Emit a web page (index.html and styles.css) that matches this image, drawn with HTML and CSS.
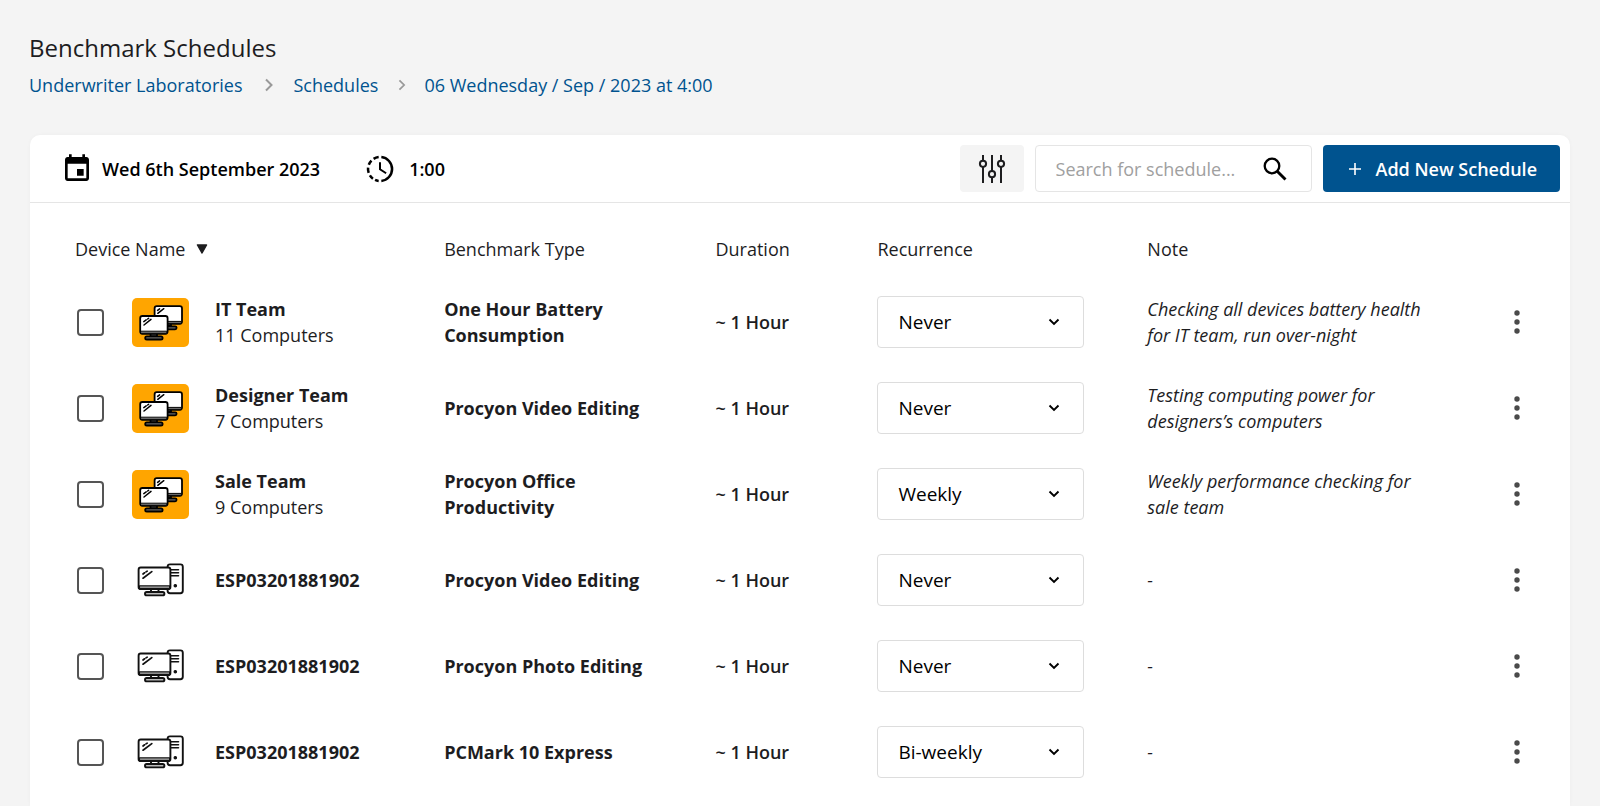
FILE: index.html
```html
<!DOCTYPE html>
<html lang="en">
<head>
<meta charset="utf-8">
<meta name="viewport" content="width=device-width, initial-scale=1">
<title>Benchmark Schedules</title>
<link rel="stylesheet" href="styles.css">
</head>
<body>
<svg class="sprite" aria-hidden="true">
  <symbol id="icon-team" viewBox="0 0 57 49">
    <g stroke="#000" stroke-width="1.8" stroke-linecap="round" stroke-linejoin="round">
      <path d="M33 25v3h6v-3" fill="#666"/>
      <rect x="28" y="28.3" width="16.6" height="3" rx="1.5" fill="#666"/>
      <rect x="22.6" y="8.2" width="27.4" height="17.6" rx="2.2" fill="#fff"/>
      <path d="M23.5 23.4h25.8v1.8H23.500z" fill="#999" stroke-width="1"/>
      <path d="M25.800 15.300l6-4.600M25.600 12.400l2-1.500" stroke-width="1.500"/>
      <path d="M18.500 35.500v3h6.500v-3" fill="#666"/>
      <rect x="13.200" y="38.300" width="17.400" height="3.200" rx="1.600" fill="#666"/>
      <rect x="8.200" y="18" width="27.400" height="17.800" rx="2.200" fill="#fff"/>
      <path d="M9 33.200h25.800v2H9z" fill="#999" stroke-width="1"/>
      <path d="M12 27l7-5.600M11.800 23.600l2.400-1.700M15.600 21l1-.7" stroke-width="1.500"/>
    </g>
  </symbol>
  <symbol id="icon-pc" viewBox="0 0 57 49">
    <g stroke="#111" stroke-width="1.900" stroke-linecap="round" stroke-linejoin="round">
      <rect x="35.600" y="8.400" width="15.200" height="28.800" rx="2.400" fill="#fff"/>
      <path d="M38 13.800h8.500M38 16.800h8.500M38 19.800h8.500" stroke-width="1.600"/>
      <circle cx="43.300" cy="29.800" r="1.200" fill="#111" stroke-width="1.200"/>
      <path d="M19 33.500v3h7.500v-3" fill="#fff"/>
      <rect x="13" y="36" width="19.400" height="3.400" rx="1.700" fill="#bbb"/>
      <rect x="6.600" y="11.500" width="31.800" height="21.600" rx="2.200" fill="#fff"/>
      <path d="M7.400 29.800h30.300v2.500H7.400z" fill="#bbb" stroke-width="1.300"/>
      <path d="M11 22.200l8.800-6.600M11 18l1.600-1.200M14 15.900l1.200-.8" stroke-width="1.700"/>
    </g>
  </symbol>
  <symbol id="icon-dots" viewBox="0 0 24 24">
    <circle cx="12" cy="3" r="2.700"/><circle cx="12" cy="12" r="2.700"/><circle cx="12" cy="21" r="2.700"/>
  </symbol>
  <symbol id="icon-down" viewBox="0 0 12 8">
    <path d="M1.500 1.500L6 6l4.500-4.500" fill="none" stroke="#000" stroke-width="1.900"/>
  </symbol>
</svg>

<main class="page">
  <h1 class="title">Benchmark Schedules</h1>
  <nav class="crumbs" aria-label="Breadcrumb">
    <a href="#">Underwriter Laboratories</a>
    <svg class="crumb-arrow" viewBox="0 0 10 14" aria-hidden="true"><path d="M2 1.500L7.500 7 2 12.500"/></svg>
    <a href="#">Schedules</a>
    <svg class="crumb-arrow crumb-arrow-small" viewBox="0 0 10 14" aria-hidden="true"><path d="M2 1.500L7.500 7 2 12.500"/></svg>
    <a href="#" aria-current="page">06 Wednesday / Sep / 2023 at 4:00</a>
  </nav>

  <section class="card">
    <div class="toolbar">
      <div class="when">
        <svg class="when-icon" viewBox="0 0 24 24" aria-hidden="true"><path d="M17 12h-5v5h5v-5zM16 1v2H8V1H6v2H5c-1.110 0-1.990.9-1.990 2L3 19c0 1.100.89 2 2 2h14c1.100 0 2-.9 2-2V5c0-1.100-.9-2-2-2h-1V1h-2zm3 18H5V8h14v11z"/></svg>
        <span>Wed 6th September 2023</span>
      </div>
      <div class="when when-time">
        <svg class="when-icon" viewBox="0 0 24 24" fill="none" stroke="#000" stroke-width="1.900" aria-hidden="true">
          <path d="M13 3.050A9 9 0 0 1 13 20.950"/>
          <path d="M11 3.050A9 9 0 0 0 7.200 4.400M5.600 5.650A9 9 0 0 0 3.600 8.800M3.050 11A9 9 0 0 0 3.500 14.900M4.400 16.800A9 9 0 0 0 6.700 19.250M8.300 20.200A9 9 0 0 0 11 20.950"/>
          <path d="M12 7v5.200l4.600 3" stroke-width="1.500"/>
        </svg>
        <span>1:00</span>
      </div>
      <div class="actions">
        <button class="filter" type="button" aria-label="Filter schedules">
          <svg class="filter-icon" viewBox="0 0 28 30" fill="none" stroke="#1d1d1f" stroke-width="2" aria-hidden="true">
            <path d="M5 1v5.500M5 13v16M14 1v16M14 23.500V29M23 1v5.500M23 13v16"/>
            <circle cx="5" cy="9.800" r="3.100"/><circle cx="14" cy="20.200" r="3.100"/><circle cx="23" cy="9.800" r="3.100"/>
          </svg>
        </button>
        <form class="search" role="search">
          <input class="search-input" type="search" aria-label="Search for schedule" placeholder="Search for schedule...">
          <button class="search-button" type="button" aria-label="Search">
            <svg class="search-icon" viewBox="0 0 24 24" fill="none" stroke="#000" aria-hidden="true"><circle cx="9" cy="9" r="7.300" stroke-width="2.300"/><path d="M14.200 14.200l8.300 8.300" stroke-width="2.900"/></svg>
          </button>
        </form>
        <button class="add" type="button">
          <svg class="add-icon" viewBox="0 0 14 14" aria-hidden="true"><path d="M7 1v12M1 7h12" stroke="#fff" stroke-width="1.600"/></svg>
          <span>Add New Schedule</span>
        </button>
      </div>
    </div>

    <div class="table-wrap">
      <table class="table">
        <colgroup><col class="col-name"><col class="col-type"><col class="col-duration"><col class="col-recurrence"><col><col class="col-menu"></colgroup>
        <thead>
          <tr>
            <th scope="col"><button class="sort" type="button">Device Name <svg class="sort-icon" viewBox="0 0 12 10" aria-hidden="true"><path d="M1.500 1h9L6 9z" stroke="#1d1d1f" stroke-width="1.500" stroke-linejoin="round" fill="#1d1d1f"/></svg></button></th>
            <th scope="col">Benchmark Type</th>
            <th scope="col">Duration</th>
            <th scope="col">Recurrence</th>
            <th scope="col">Note</th>
            <td></td>
          </tr>
        </thead>
        <tbody>
          <tr>
            <td><div class="device"><input class="check" type="checkbox" id="d1"><svg class="device-icon device-team" aria-hidden="true"><use href="#icon-team"/></svg><label for="d1"><strong>IT Team</strong><span>11 Computers</span></label></div></td>
            <td class="type">One Hour Battery Consumption</td>
            <td class="duration">~ 1 Hour</td>
            <td><div class="select"><select aria-label="Recurrence for IT Team"><option>Never</option><option>Weekly</option><option>Bi-weekly</option></select><svg class="select-icon" aria-hidden="true"><use href="#icon-down"/></svg></div></td>
            <td><p class="note">Checking all devices battery health for IT team, run over-night</p></td>
            <td><button class="menu" type="button" aria-label="More options"><svg class="menu-icon" aria-hidden="true"><use href="#icon-dots"/></svg></button></td>
          </tr>
          <tr>
            <td><div class="device"><input class="check" type="checkbox" id="d2"><svg class="device-icon device-team" aria-hidden="true"><use href="#icon-team"/></svg><label for="d2"><strong>Designer Team</strong><span>7 Computers</span></label></div></td>
            <td class="type">Procyon Video Editing</td>
            <td class="duration">~ 1 Hour</td>
            <td><div class="select"><select aria-label="Recurrence for Designer Team"><option>Never</option><option>Weekly</option><option>Bi-weekly</option></select><svg class="select-icon" aria-hidden="true"><use href="#icon-down"/></svg></div></td>
            <td><p class="note">Testing computing power for designers’s computers</p></td>
            <td><button class="menu" type="button" aria-label="More options"><svg class="menu-icon" aria-hidden="true"><use href="#icon-dots"/></svg></button></td>
          </tr>
          <tr>
            <td><div class="device"><input class="check" type="checkbox" id="d3"><svg class="device-icon device-team" aria-hidden="true"><use href="#icon-team"/></svg><label for="d3"><strong>Sale Team</strong><span>9 Computers</span></label></div></td>
            <td class="type">Procyon Office Productivity</td>
            <td class="duration">~ 1 Hour</td>
            <td><div class="select"><select aria-label="Recurrence for Sale Team"><option>Never</option><option selected>Weekly</option><option>Bi-weekly</option></select><svg class="select-icon" aria-hidden="true"><use href="#icon-down"/></svg></div></td>
            <td><p class="note">Weekly performance checking for sale team</p></td>
            <td><button class="menu" type="button" aria-label="More options"><svg class="menu-icon" aria-hidden="true"><use href="#icon-dots"/></svg></button></td>
          </tr>
          <tr>
            <td><div class="device"><input class="check" type="checkbox" id="d4"><svg class="device-icon" aria-hidden="true"><use href="#icon-pc"/></svg><label for="d4"><strong>ESP03201881902</strong></label></div></td>
            <td class="type">Procyon Video Editing</td>
            <td class="duration">~ 1 Hour</td>
            <td><div class="select"><select aria-label="Recurrence for ESP03201881902, video editing"><option>Never</option><option>Weekly</option><option>Bi-weekly</option></select><svg class="select-icon" aria-hidden="true"><use href="#icon-down"/></svg></div></td>
            <td><p class="note">-</p></td>
            <td><button class="menu" type="button" aria-label="More options"><svg class="menu-icon" aria-hidden="true"><use href="#icon-dots"/></svg></button></td>
          </tr>
          <tr>
            <td><div class="device"><input class="check" type="checkbox" id="d5"><svg class="device-icon" aria-hidden="true"><use href="#icon-pc"/></svg><label for="d5"><strong>ESP03201881902</strong></label></div></td>
            <td class="type">Procyon Photo Editing</td>
            <td class="duration">~ 1 Hour</td>
            <td><div class="select"><select aria-label="Recurrence for ESP03201881902, photo editing"><option>Never</option><option>Weekly</option><option>Bi-weekly</option></select><svg class="select-icon" aria-hidden="true"><use href="#icon-down"/></svg></div></td>
            <td><p class="note">-</p></td>
            <td><button class="menu" type="button" aria-label="More options"><svg class="menu-icon" aria-hidden="true"><use href="#icon-dots"/></svg></button></td>
          </tr>
          <tr>
            <td><div class="device"><input class="check" type="checkbox" id="d6"><svg class="device-icon" aria-hidden="true"><use href="#icon-pc"/></svg><label for="d6"><strong>ESP03201881902</strong></label></div></td>
            <td class="type">PCMark 10 Express</td>
            <td class="duration">~ 1 Hour</td>
            <td><div class="select"><select aria-label="Recurrence for ESP03201881902, PCMark 10"><option>Never</option><option>Weekly</option><option selected>Bi-weekly</option></select><svg class="select-icon" aria-hidden="true"><use href="#icon-down"/></svg></div></td>
            <td><p class="note">-</p></td>
            <td><button class="menu" type="button" aria-label="More options"><svg class="menu-icon" aria-hidden="true"><use href="#icon-dots"/></svg></button></td>
          </tr>
        </tbody>
      </table>
    </div>
  </section>
</main>
</body>
</html>
```
FILE: styles.css
```css
* { box-sizing: border-box; }

body {
  margin: 0;
  background: #f4f4f4;
  color: #1d1d1f;
  font: 400 18px/26px "Open Sans", "Noto Sans", sans-serif;
}

button, input, select { font: inherit; color: inherit; }
button { border: 0; background: none; padding: 0; cursor: pointer; }

.sprite { display: none; }

.page {
  display: flex;
  flex-direction: column;
  min-height: 100vh;
  padding: 32px 30px 0 29px;
}

.title { margin: 0; font-size: 24px; line-height: 32px; font-weight: 400; }

.crumbs { display: flex; align-items: center; margin-top: 8px; }
.crumbs a { color: #00538f; text-decoration: none; }
.crumb-arrow {
  width: 10px;
  height: 14px;
  margin: 0 19px 0 22px;
  fill: none;
  stroke: #999;
  stroke-width: 2;
}
.crumb-arrow-small { height: 12px; margin: 0 17px 0 19px; }

.card {
  flex: 1;
  margin: 37px 0 0 1px;
  background: #fff;
  border-radius: 10px 10px 0 0;
  box-shadow: 0 0 4px rgba(0, 0, 0, 0.03);
}

.toolbar {
  display: flex;
  align-items: center;
  padding: 10px 10px 10px 31px;
  border-bottom: 1px solid #e5e5e5;
}
.when { display: flex; align-items: center; gap: 9px; color: #000; font-weight: 600; }
.when-time { margin-left: 44px; gap: 13px; }
.when-icon { width: 32px; height: 32px; }

.actions { display: flex; gap: 11px; margin-left: auto; }
.filter {
  display: grid;
  place-items: center;
  width: 64px;
  height: 47px;
  border-radius: 4px;
  background: #f4f4f4;
}
.filter-icon { width: 28px; height: 30px; }

.search {
  display: flex;
  align-items: center;
  width: 277px;
  padding: 0 24px 0 20px;
  border: 1px solid #e5e5e5;
  border-radius: 4px;
}
.search-input {
  flex: 1;
  min-width: 0;
  padding: 0;
  border: 0;
  outline: 0;
  background: none;
  appearance: none;
}
.search-input::placeholder { color: #a0a0a0; opacity: 1; }
.search-button { display: flex; }
.search-icon { width: 24px; height: 24px; }

.add {
  display: flex;
  align-items: center;
  gap: 14px;
  padding: 0 23px 0 25px;
  border-radius: 4px;
  background: #00538f;
  color: #fff;
  font-weight: 600;
}
.add-icon { width: 14px; height: 14px; }

.table-wrap { padding: 33px 36px 0 45px; }
.table { width: 100%; border-collapse: collapse; table-layout: fixed; }
.table th, .table td { padding: 0; text-align: left; font-weight: 400; }
.table tbody tr { height: 86px; }
.table thead tr { height: 43px; }
.table thead th { vertical-align: top; }
.table tbody td { vertical-align: middle; }
.col-name { width: 25.3%; }
.col-type { width: 18.6%; }
.col-duration { width: 11.1%; }
.col-recurrence { width: 18.5%; }
.col-menu { width: 34px; }

.sort { display: flex; align-items: center; gap: 11px; }
.sort-icon { width: 12px; height: 10px; }

.device { display: flex; align-items: center; padding-left: 2px; }
.check {
  appearance: none;
  width: 27px;
  height: 27px;
  margin: 0 28px 0 0;
  border: 2px solid #555;
  border-radius: 4px;
  background: #fff;
}
.check:checked { background: #00538f; }
.device-icon { flex: none; width: 57px; height: 49px; margin-right: 26px; }
.device-team { background: #ffa500; border-radius: 5px; }
.device label { display: flex; flex-direction: column; }
.device strong { font-weight: 700; }

.table .type { padding-right: 50px; font-weight: 700; }
.table .duration { font-weight: 600; }

.select { display: grid; align-items: center; width: 207px; }
.select select {
  grid-area: 1 / 1;
  width: 100%;
  height: 52px;
  padding: 0 20px;
  border: 1px solid #ddd;
  border-radius: 4px;
  background: #fff;
  color: #000;
  font-size: 19px;
  appearance: none;
}
.select-icon {
  grid-area: 1 / 1;
  justify-self: end;
  width: 12px;
  height: 8px;
  margin-right: 24px;
  pointer-events: none;
}

.note { max-width: 290px; margin: 0; font-style: italic; }
.menu { display: grid; place-items: center; width: 34px; height: 34px; }
.menu-icon { width: 24px; height: 24px; fill: #4a4a4a; }
```
